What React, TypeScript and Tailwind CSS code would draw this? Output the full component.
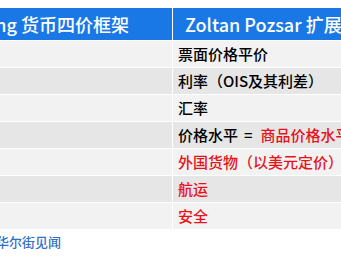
const rows: { left: string; right: React.ReactNode }[] = [
  { left: "", right: <span>票面价格平价</span> },
  { left: "", right: <span>利率（OIS及其利差）</span> },
  { left: "", right: <span>汇率</span> },
  {
    left: "",
    right: (
      <span>
        价格水平<span className="ml-[6px] mr-[8px]">=</span>
        <span className="text-[#e8121a]">商品价格水平</span>
      </span>
    ),
  },
  { left: "", right: <span className="text-[#e8121a]">外国货物（以美元定价）</span> },
  { left: "", right: <span className="text-[#e8121a]">航运</span> },
  { left: "", right: <span className="text-[#e8121a]">安全</span> },
];

export default function App() {
  return (
    <div
      className="w-[341px] h-[256px] bg-white overflow-hidden pt-[8px] font-medium"
      style={{ fontFamily: '"Noto Sans CJK SC", "Liberation Sans", sans-serif' }}
    >
      <div className="grid grid-cols-[172px_200px] gap-x-px gap-y-px w-[373px]">
        <div className="h-[32px] bg-[#1a78e6] text-white text-[18px] flex items-center justify-end pr-[43px] whitespace-nowrap overflow-hidden">
          Perry Mehrling 货币四价框架
        </div>
        <div className="h-[32px] bg-[#1a78e6] text-white text-[18px] flex items-center pl-[12px] whitespace-nowrap overflow-hidden">
          Zoltan Pozsar 扩展框架
        </div>
        {rows.map((r, i) => {
          const bg = i % 2 === 0 ? "bg-[#f2f2f2]" : "bg-[#e6e6e6]";
          return [
            <div key={`l${i}`} className={`h-[26px] ${bg}`}>
              {r.left}
            </div>,
            <div
              key={`r${i}`}
              className={`h-[26px] ${bg} text-[15px] text-black flex items-center pl-[5px] whitespace-nowrap overflow-hidden`}
            >
              {r.right}
            </div>,
          ];
        })}
      </div>
      <div className="mt-[5px] ml-[-4px] text-[13px] text-[#2f6fc4] leading-[16px]">华尔街见闻</div>
    </div>
  );
}
